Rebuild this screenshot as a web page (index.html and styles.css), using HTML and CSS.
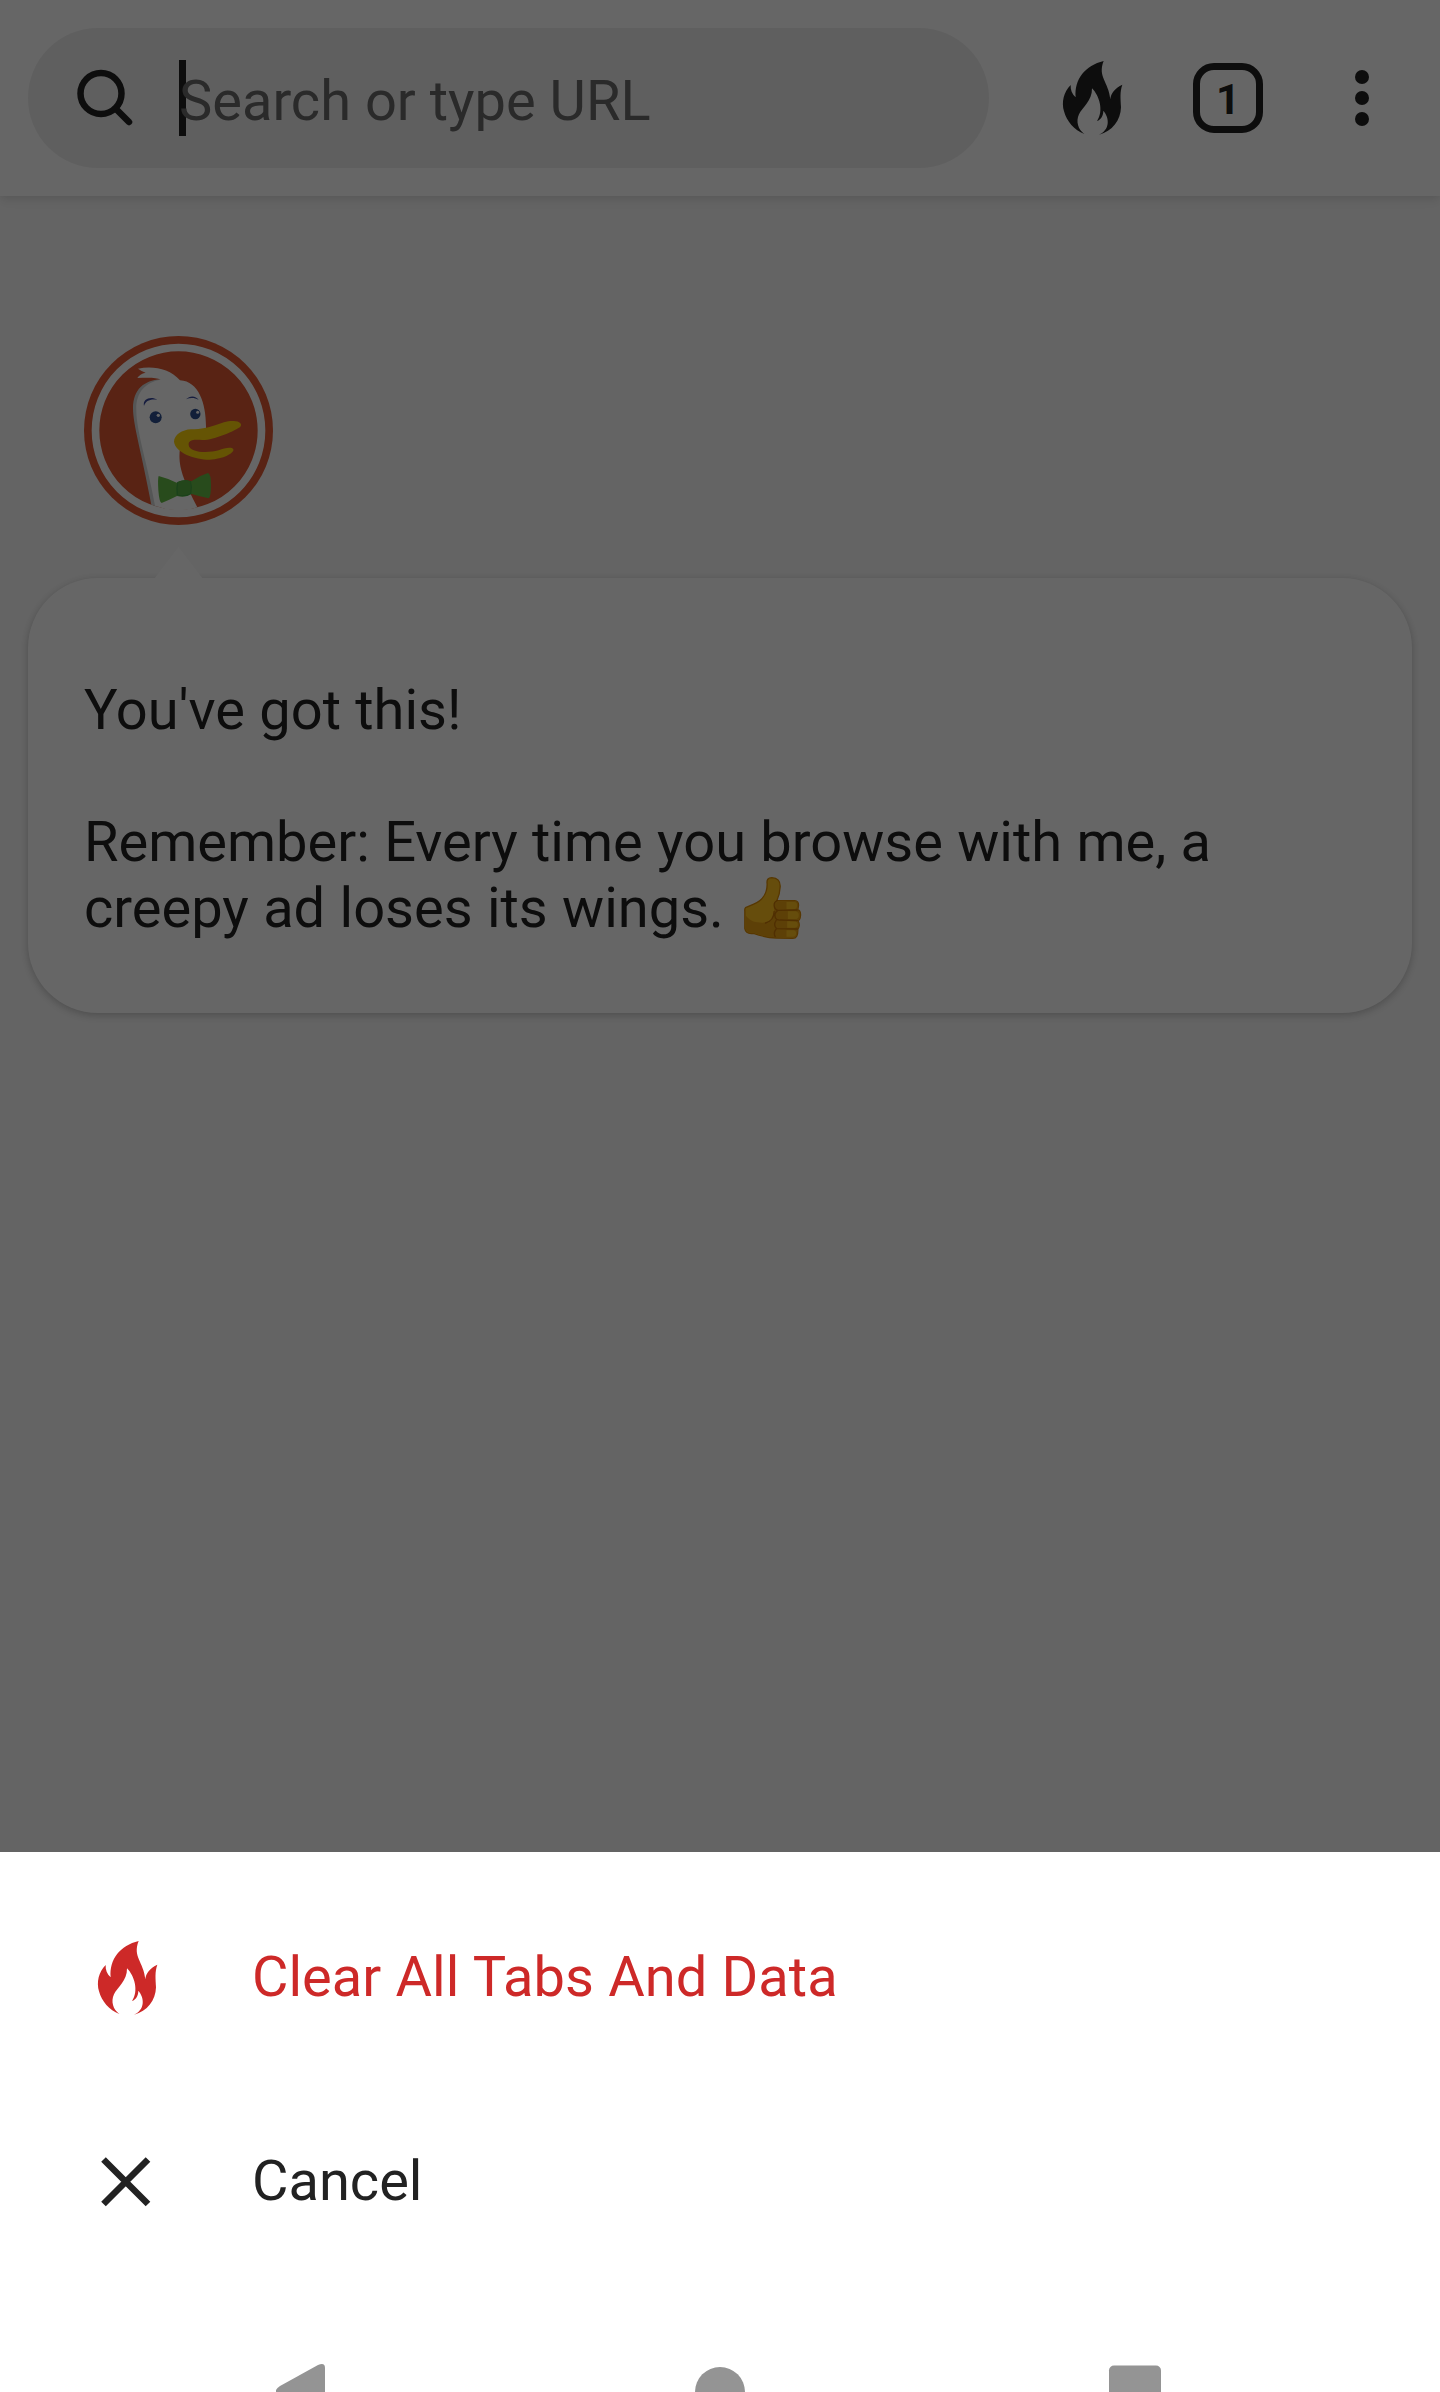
FILE: index.html
```html
<!DOCTYPE html>
<html lang="en">
<head>
<meta charset="utf-8">
<title>New Tab</title>
<link rel="stylesheet" href="styles.css">
</head>
<body>
<svg class="defs" aria-hidden="true">
  <symbol id="fire" viewBox="270 168 252 252">
    <path fill="currentColor" d="M431 183C376 196 342 238 347 292C336 282 331 269 332 255C311 275 304 307 312 334C320 364 343 391 373 402C354 389 347 364 357 343C366 323 397 303 396 265C418 287 432 333 411 363C423 359 430 347 430 332C450 355 449 390 417 404C457 395 482 360 483 322C482 296 479 276 487 254C466 263 452 280 451 298C446 245 412 231 431 183Z"/>
  </symbol>
</svg>
<div class="screen">
  <div class="browser">
    <header class="toolbar">
      <div class="search">
        <svg class="search-icon" viewBox="0 0 60 60"><circle cx="26" cy="25.500" r="20.500"/><path d="M40.500 40.500L54 54"/></svg>
        <span class="caret"></span>
        <span class="hint">Search or type URL</span>
      </div>
      <svg class="tool fire"><use href="#fire"/></svg>
      <div class="tabs">1</div>
      <svg class="menu" viewBox="0 0 14 56"><circle cx="7" cy="7" r="7"/><circle cx="7" cy="28" r="7"/><circle cx="7" cy="49" r="7"/></svg>
    </header>
    <main class="content">
      <svg class="logo" viewBox="72 48 567 567">
        <circle cx="355.500" cy="331.500" r="283.500" fill="#de5833"/>
        <circle cx="355.500" cy="331.500" r="249" fill="#de5833" stroke="#fff" stroke-width="23"/>
        <path fill="#d5d7d8" d="M302 178C252 182 220 207 219 265C219 314 244 395 274 554L292 560L330 210Z"/>
        <path fill="#fff" d="M302 179C290 172 263 173 232 174Q239 162 257 158Q245 154 234 146C282 137 329 147 360 181C418 184 439 254 438 325L360 385C353 438 368 475 412 562Q350 582 285 557C264 438 229 335 229 271C227 218 255 187 302 179Z"/>
        <circle cx="287" cy="292" r="18" fill="#2d4f8e"/><circle cx="295" cy="286" r="5" fill="#fff"/>
        <circle cx="406" cy="282" r="15.500" fill="#2d4f8e"/><circle cx="413" cy="277" r="4.500" fill="#fff"/>
        <path fill="#394a9f" d="M252 258C247 237 272 228 292 239C270 236 257 242 252 258ZM378 238C390 225 408 227 416 240C402 232 391 233 378 238Z"/>
        <path fill="#fdd20a" d="M342 365C342 345 367 329 393 328C457 328 480 303 519 303C538 302 548 312 541 320C529 331 459 361 427 360C397 357 385 361 386 374C386 398 443 400 476 391C494 384 515 380 520 388C524 399 489 418 449 419C405 419 346 398 342 365Z"/>
        <path fill="#65bc46" d="M296 468Q326 476 350 488Q369 477 394 484Q417 467 444 459Q453 462 453 495Q453 532 446 535Q421 530 395 522Q376 534 351 528Q327 540 305 549Q298 549 295 511Q293 474 296 468Z"/>
        <path fill="#43a244" d="M352 486Q372 476 393 484Q398 502 394 521Q376 534 350 526Q346 505 352 486Z"/>
        <path fill="#57b045" d="M355 486Q373 477 391 484Q394 502 391 520Q376 529 354 524Q351 505 355 486Z"/>
      </svg>
      <section class="bubble">
        <p>You've got this!</p>
        <p>Remember: Every time you browse with me, a creepy ad loses its wings. <svg class="thumb" viewBox="70 48 176 192">
          <path fill="#ffc01e" stroke="#d98b05" stroke-width="4" stroke-linejoin="round" d="M77 143L100 133C127 123 142 100 142 72Q139 53 156 53Q182 54 181 80Q180 103 171 122H225Q237 123 236 137L234 149Q243 153 242 166Q241 179 235 182Q242 197 234 208Q235 235 219 235L169 234Q137 233 101 220Q78 223 75 206V153Q74 146 77 143Z"/>
          <path fill="#e9a013" d="M77 166C98 193 120 187 145 188C161 180 164 160 164 132Q171 121 183 124H224Q235 126 235 138L233 150Q241 156 240 167Q240 179 232 182Q240 195 233 207Q233 233 219 233L170 232Q137 231 101 218Q79 221 77 205Z"/>
          <path fill="#ffc01e" d="M200 126H224Q233 127 232 138Q231 147 222 148H200ZM204 154H228Q238 157 237 167Q236 177 226 177H204ZM202 184H226Q235 187 234 195Q233 203 224 203H202ZM200 211H222Q230 213 229 221Q228 230 219 230H200Z"/>
          <path fill="none" stroke="#c87605" stroke-width="4" stroke-linecap="round" stroke-linejoin="round" d="M172 122Q162 126 163 137Q164 149 174 151L232 150M174 151Q161 160 167 174Q170 181 182 180L233 182M169 181Q159 196 171 206L233 207M169 207Q160 218 166 230M163 154Q162 183 137 189"/>
        </svg></p>
      </section>
    </main>
    <div class="scrim"></div>
  </div>
  <div class="sheet">
    <div class="action danger"><svg class="action-icon"><use href="#fire"/></svg><span>Clear All Tabs And Data</span></div>
    <div class="action"><svg class="action-icon" viewBox="0 0 84 84"><path d="M18.500 19.500L63 64M63 19.500L18.500 64" fill="none" stroke="currentColor" stroke-width="6.500"/></svg><span>Cancel</span></div>
    <svg class="nav" viewBox="0 0 1440 32"><g fill="#949494"><path d="M276 32V30Q277 28 280 26L318 5Q325 2 325 8V32Z"/><circle cx="720" cy="32" r="25"/><rect x="1109" y="5.600" width="52" height="52" rx="5"/></g></svg>
  </div>
</div>
</body>
</html>
```
FILE: styles.css
```css
* { box-sizing: border-box; }
body { margin: 0; font: 400 56px/66px Roboto, sans-serif; color: #222; }
p { margin: 0; }
.defs { position: absolute; width: 0; height: 0; }
.screen { width: 1440px; height: 2392px; display: flex; flex-direction: column; overflow: hidden; background: #fff; }
.browser { position: relative; flex: 1; background: #fafafa; }
.scrim { position: absolute; inset: 0; background: rgba(0, 0, 0, .6); }
.toolbar { height: 196px; padding: 0 71px 0 28px; display: flex; align-items: center; background: #fff; box-shadow: 0 2px 8px rgba(0, 0, 0, .09), 0 5px 14px rgba(0, 0, 0, .05); }
.search { width: 961px; height: 140px; border-radius: 70px; background: #eee; display: flex; align-items: center; padding-left: 47px; }
.search-icon { width: 60px; height: 60px; fill: none; stroke: #222; stroke-width: 6.5; stroke-linecap: round; }
.caret { width: 7px; height: 76px; margin-left: 44px; background: #222; }
.hint { margin-left: -7px; padding-top: 6px; color: #696969; }
.tool { width: 84px; height: 84px; }
.fire { margin-left: 61px; }
.tabs { width: 70px; height: 70px; margin-left: 59px; border: 7px solid #222; border-radius: 21px; font-size: 42px; font-weight: 700; line-height: 59px; text-align: center; }
.menu { width: 14px; height: 56px; margin-left: auto; margin-right: 0; fill: #222; }
.content { padding: 140px 28px 0; }
.logo { display: block; width: 189px; height: 189px; margin-left: 56px; }
.bubble { position: relative; height: 435px; margin-top: 53px; padding: 99px 56px 0; border-radius: 70px; background: #fff; word-spacing: .45px; box-shadow: 0 2px 7px rgba(0, 0, 0, .18), 0 3px 14px rgba(0, 0, 0, .06); }
.bubble::before { content: ""; position: absolute; left: 126px; top: -31px; width: 49px; height: 32px; background: #fff; clip-path: polygon(50% 0, 100% 100%, 0 100%); }
.bubble p + p { margin-top: 66px; }
.thumb { display: inline-block; width: 59px; height: 64px; margin: 0 0 -13px 5px; vertical-align: baseline; }
.sheet { height: 540px; padding-top: 24px; display: flex; flex-direction: column; background: #fff; }
.action { height: 204px; padding-left: 85px; display: flex; align-items: center; }
.action span { margin-left: 83px; padding-bottom: 2px; word-spacing: .5px; }
.action-icon { width: 84px; height: 84px; }
.danger { color: #cd2928; }
.nav { width: 1440px; height: 32px; margin-top: auto; }
```
